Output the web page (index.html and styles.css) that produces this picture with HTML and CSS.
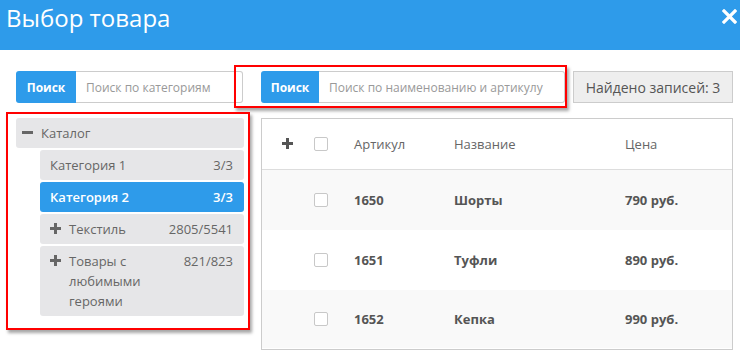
FILE: index.html
```html
<!DOCTYPE html>
<html lang="ru">
<head>
<meta charset="utf-8">
<link rel="stylesheet" href="styles.css">
</head>
<body>
<header class="modal-head">
  <h1 class="modal-title">Выбор товара</h1>
  <svg class="close" width="15" height="15" viewBox="0 0 15 15"><path d="M2 2L13 13M13 2L2 13" stroke="#fff" stroke-width="3.2" stroke-linecap="square"/></svg>
</header>
<main class="layout">
  <div class="search search-left">
    <span class="search-btn">Поиск</span>
    <span class="search-input">Поиск по категориям</span>
  </div>
  <div class="top-right">
    <div class="search search-main">
      <span class="search-btn btn-narrow">Поиск</span>
      <span class="search-input">Поиск по наименованию и артикулу</span>
    </div>
    <div class="found">Найдено записей: 3</div>
  </div>
  <nav class="tree">
    <div class="node root"><span class="ico minus"></span><span class="label">Каталог</span></div>
    <div class="children">
      <div class="node"><span class="label">Категория 1</span><span class="count">3/3</span></div>
      <div class="node active"><span class="label">Категория 2</span><span class="count">3/3</span></div>
      <div class="node"><span class="ico plus"></span><span class="label">Текстиль</span><span class="count">2805/5541</span></div>
      <div class="node"><span class="ico plus"></span><span class="label narrow">Товары с любимыми героями</span><span class="count">821/823</span></div>
    </div>
  </nav>
  <section class="table">
    <div class="row head">
      <span class="cell"><span class="ico plus dark"></span></span>
      <span class="cell"><span class="cb"></span></span>
      <span class="cell">Артикул</span>
      <span class="cell">Название</span>
      <span class="cell">Цена</span>
    </div>
    <div class="row odd">
      <span class="cell"></span><span class="cell"><span class="cb"></span></span>
      <span class="cell">1650</span><span class="cell">Шорты</span><span class="cell">790 руб.</span>
    </div>
    <div class="row">
      <span class="cell"></span><span class="cell"><span class="cb"></span></span>
      <span class="cell">1651</span><span class="cell">Туфли</span><span class="cell">890 руб.</span>
    </div>
    <div class="row odd">
      <span class="cell"></span><span class="cell"><span class="cb"></span></span>
      <span class="cell">1652</span><span class="cell">Кепка</span><span class="cell">990 руб.</span>
    </div>
  </section>
</main>
<div class="mark mark-search"></div>
<div class="mark mark-tree"></div>
</body>
</html>
```
FILE: styles.css
```css
* { box-sizing: border-box; }
html, body { margin: 0; padding: 0; }
body {
  position: relative;
  width: 740px;
  height: 363px;
  overflow: hidden;
  background: #fff;
  font-family: "Open Sans", "Noto Sans", sans-serif;
  color: #666;
}
.modal-head {
  height: 50px;
  background: #2e9bea;
  display: flex;
  justify-content: space-between;
  align-items: flex-start;
  padding: 2px 3px 0 6px;
}
.modal-title {
  margin: 0;
  font-size: 24px;
  line-height: 32px;
  font-weight: 400;
  color: #fff;
}
.close { margin-top: 7px; }

.layout {
  display: grid;
  grid-template-columns: 228px 472px;
  grid-template-rows: 32px 232px;
  column-gap: 17px;
  row-gap: 15px;
  padding: 21px 0 0 16px;
}
.search { display: flex; height: 32px; }
.search-left { width: 227px; }
.search-btn {
  width: 60px;
  flex: none;
  background: #2e9bea;
  color: #fff;
  font-weight: 700;
  font-size: 12px;
  display: flex;
  align-items: center;
  justify-content: center;
  border-radius: 3px 0 0 3px;
}
.btn-narrow { width: 58px; }
.search-input {
  flex: 1;
  border: 1px solid #ccc;
  border-left: none;
  border-radius: 0 3px 3px 0;
  font-size: 12px;
  color: #999;
  display: flex;
  align-items: center;
  padding-left: 10px;
}
.top-right { display: flex; gap: 8px; }
.search-main { flex: 1; }
.found {
  width: 160px;
  flex: none;
  background: #eee;
  border: 1px solid #ccc;
  font-size: 14px;
  color: #555;
  display: flex;
  align-items: center;
  justify-content: center;
}

.tree { display: flex; flex-direction: column; gap: 2px; }
.children { display: flex; flex-direction: column; gap: 2px; padding-left: 24px; }
.node {
  display: flex;
  align-items: flex-start;
  background: #e6e6e8;
  border-radius: 3px;
  font-size: 13px;
  line-height: 20px;
  padding: 5px 11px 5px 10px;
  color: #666;
}
.node.root { padding-left: 6px; }
.node.active { background: #2e9bea; color: #fff; font-weight: 600; }
.label { flex: 1; }
.label.narrow { flex: none; width: 80px; margin-right: auto; }
.count { flex: none; }
.ico { position: relative; flex: none; width: 11px; height: 20px; margin-right: 8px; }
.ico::before, .ico.plus::after {
  content: "";
  position: absolute;
  background: #666;
}
.ico::before { left: 0; top: 8px; width: 11px; height: 3px; }
.ico.plus::after { left: 4px; top: 4px; width: 3px; height: 11px; }
.ico.dark::before, .ico.dark::after { background: #555; }

.table {
  border: 1px solid #ccc;
  display: flex;
  flex-direction: column;
}
.row {
  display: grid;
  grid-template-columns: 52px 40px 100px 171px 1fr;
  align-items: center;
  height: 60px;
  font-size: 13px;
  font-weight: 700;
  color: #555;
}
.row.head {
  height: 51px;
  font-weight: 400;
  color: #666;
  border-bottom: 1px solid #ddd;
}
.row.odd { background: #f9f9f9; }
.row.odd:last-child { height: 58px; }
.cell { display: flex; align-items: center; }
.cell:first-child { padding-left: 20px; }
.row.head .ico { margin: 0; }
.cb {
  width: 14px;
  height: 14px;
  border: 1px solid #c8c8c8;
  border-radius: 2px;
  background: #fff;
}

.mark {
  position: absolute;
  border: 2px solid #f00;
  box-shadow: 2px 3px 3px rgba(0,0,0,0.35);
  pointer-events: none;
}
.mark-search { left: 234px; top: 65px; width: 333px; height: 43px; }
.mark-tree { left: 6px; top: 112px; width: 244px; height: 218px; }
```
